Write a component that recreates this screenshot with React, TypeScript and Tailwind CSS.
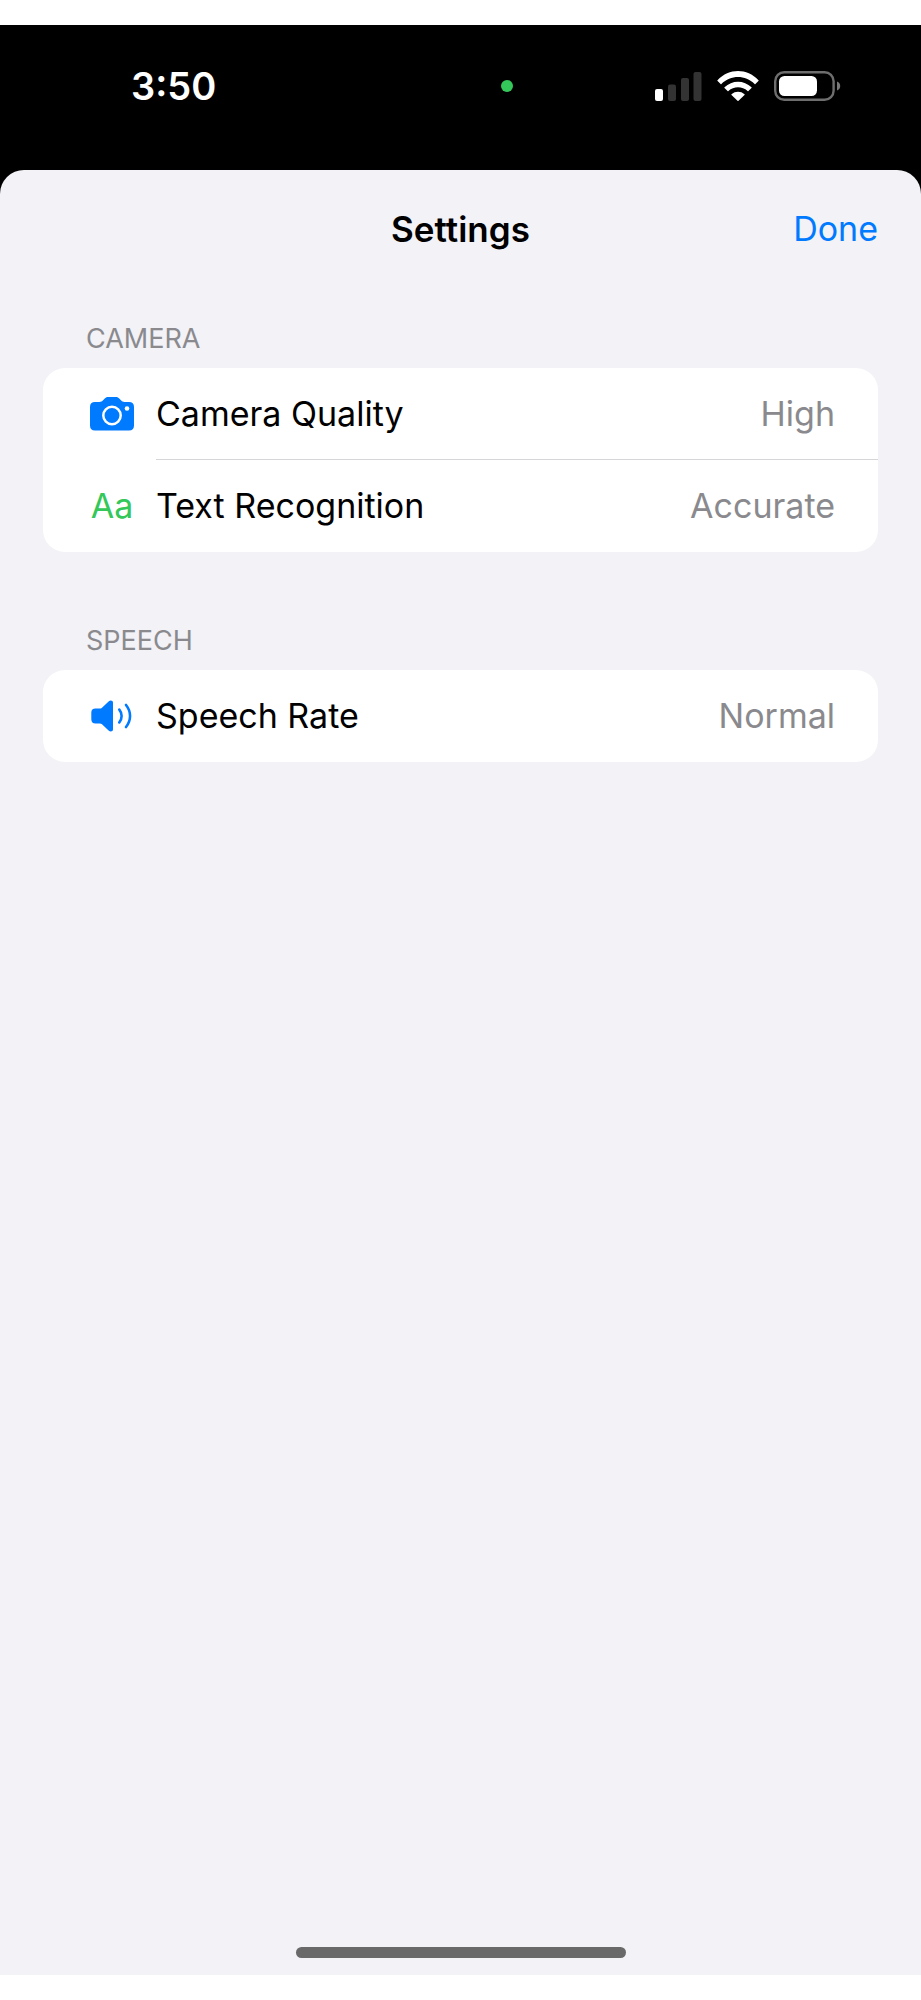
import React, { ReactNode } from "react";

type Row = {
    label: string;
    value: string;
    icon: ReactNode;
};

type Section = {
    title: string;
    rows: Row[];
};

const CameraIcon = () => (
    <svg width="44" height="34" viewBox="0 0 44 34" aria-hidden="true">
        <path
            fill="#007aff"
            d="M5 5H9.5C11 5 11.8 4.6 12.8 3.6L14.5 1.8C15.6 .6 16.5 0 18.2 0H25.8C27.5 0 28.4 .6 29.5 1.8L31.2 3.6C32.2 4.6 33 5 34.5 5H39C42.3 5 44 6.7 44 10V28.5C44 31.8 42.3 33.5 39 33.5H5C1.7 33.5 0 31.8 0 28.5V10C0 6.7 1.7 5 5 5Z"
        />
        <circle cx="22" cy="18.5" r="8.7" fill="none" stroke="#fff" strokeWidth="2.5" />
        <circle cx="37" cy="11.5" r="2.3" fill="#fff" />
    </svg>
);

const SpeakerIcon = () => (
    <svg width="44" height="32" viewBox="0 0 44 32" aria-hidden="true">
        <path
            fill="#007aff"
            d="M5.5 8.5H10C10.7 8.5 11.2 8.3 11.7 7.9L18.6 1.5C19.4 .8 20 .5 20.8 .5C22.1 .5 23 1.4 23 2.7V29.2C23 30.5 22.1 31.5 20.8 31.5C20 31.5 19.3 31.1 18.6 30.5L11.7 24C11.2 23.6 10.7 23.4 10 23.4H5.5C2.8 23.4 1.3 22 1.3 19.2V12.7C1.3 9.9 2.8 8.5 5.5 8.5Z"
        />
        <path
            fill="none"
            stroke="#007aff"
            strokeWidth="2.6"
            strokeLinecap="round"
            d="M29.3 9.6C32.4 13.3 32.4 18.7 29.3 22.4M36 5C41.4 11.7 41.4 20.3 36 27"
        />
    </svg>
);

const SignalIcon = () => (
    <svg width="47" height="30" viewBox="0 0 47 30" role="img" aria-label="Signal">
        <rect x="0" y="18" width="8" height="12" rx="2" fill="#fff" />
        <rect x="13" y="13.5" width="8" height="16.5" rx="2" fill="#333" />
        <rect x="26" y="7" width="8" height="23" rx="2" fill="#333" />
        <rect x="38.5" y="1" width="8" height="29" rx="2" fill="#333" />
    </svg>
);

const WifiIcon = () => (
    <svg width="42" height="30" viewBox="0 0 42 30" fill="#fff" role="img" aria-label="Wi-Fi">
        <path d="M.5 9.3C12-3 30-3 41.5 9.3Q41.8 9.7 41.4 10.1L38.4 13Q38 13.4 37.6 13C28.3 3.7 13.7 3.7 4.4 13Q4 13.4 3.6 13L.6 10.1Q.2 9.7 .5 9.3Z" />
        <path d="M7.5 16.3C15 8.8 27 8.8 34.5 16.3Q34.9 16.7 34.5 17.1L31.4 20Q31 20.4 30.6 20C25.2 15 16.8 15 11.4 20Q11 20.4 10.6 20L7.5 17.1Q7.1 16.7 7.5 16.3Z" />
        <path d="M14.5 23.3C18.2 20 23.8 20 27.5 23.3Q27.9 23.7 27.5 24.1L21.5 29.7Q21 30.1 20.5 29.7L14.5 24.1Q14.1 23.7 14.5 23.3Z" />
    </svg>
);

const BatteryIcon = () => (
    <svg width="67" height="30" viewBox="0 0 67 30" role="img" aria-label="Battery">
        <rect x="1.2" y="1.2" width="58.4" height="27.6" rx="9" fill="none" stroke="#6e6e6e" strokeWidth="2.4" />
        <rect x="5" y="5" width="38" height="20" rx="5.5" fill="#fff" />
        <path d="M63 10.5C67.3 12 67.3 18 63 19.5Z" fill="#777" />
    </svg>
);

const sections: Section[] = [
    {
        title: "CAMERA",
        rows: [
            { label: "Camera Quality", value: "High", icon: <CameraIcon /> },
            {
                label: "Text Recognition",
                value: "Accurate",
                icon: <span className="text-[#34c759]">Aa</span>,
            },
        ],
    },
    {
        title: "SPEECH",
        rows: [{ label: "Speech Rate", value: "Normal", icon: <SpeakerIcon /> }],
    },
];

const StatusBar = () => (
    <div className="grid grid-cols-[1fr_104px_1fr] items-center h-[145px] pb-6">
        <div className="pl-[131px] text-[38px] leading-10 font-semibold text-white">3:50</div>
        {/* camera in use */}
        <div className="flex justify-end">
            <span className="size-3 rounded-full bg-[#34c759]" />
        </div>
        <div className="flex items-center justify-end gap-[15px] pr-20">
            <SignalIcon />
            <WifiIcon />
            <BatteryIcon />
        </div>
    </div>
);

const SettingsSection = ({ title, rows }: Section) => (
    <section>
        <h2 className="px-[43px] pb-[11px] text-[27px] leading-9 text-[#8a8a8e]">{title}</h2>
        <ul className="overflow-hidden bg-white rounded-[22px]">
            {rows.map((row, index) => (
                <li key={row.label} className="flex items-center gap-5 pl-[45px]">
                    <div className="flex justify-center w-12 shrink-0">{row.icon}</div>
                    <div
                        className={`flex flex-1 items-center justify-between h-[92px] pr-[43px] ${
                            index < rows.length - 1 ? "border-b border-[#d5d6d9]" : ""
                        }`}
                    >
                        <span>{row.label}</span>
                        <span className="text-[#8a8a8e]">{row.value}</span>
                    </div>
                </li>
            ))}
        </ul>
    </section>
);

const App = () => {
    return (
        <div className="flex flex-col min-h-screen py-[25px] bg-white font-['Inter',sans-serif] text-[34px] leading-11 text-black">
            <div className="flex flex-col flex-1 bg-black">
                <StatusBar />
                <main className="flex flex-col flex-1 bg-[#f2f2f7] rounded-t-3xl">
                    <header className="grid grid-cols-[1fr_auto_1fr] items-center h-[118px] px-[43px]">
                        <h1 className="col-start-2 text-[35px] font-semibold">Settings</h1>
                        <button type="button" className="justify-self-end text-[#007aff]">
                            Done
                        </button>
                    </header>
                    <div className="flex flex-col flex-1 gap-[71px] px-[43px] pt-[33px]">
                        {sections.map((section) => (
                            <SettingsSection key={section.title} {...section} />
                        ))}
                    </div>
                    {/* home indicator */}
                    <div className="self-center w-[330px] h-[11px] mb-[17px] rounded-full bg-[#696969]" />
                </main>
            </div>
        </div>
    );
};

export default App;
